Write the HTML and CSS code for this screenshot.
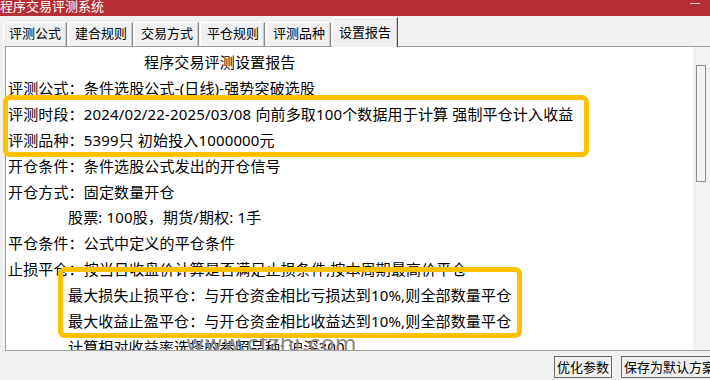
FILE: index.html
```html
<!DOCTYPE html>
<html lang="zh-CN">
<head>
    <meta charset="UTF-8">
    <title>程序交易评测系统</title>
    <link rel="stylesheet" href="styles.css">
</head>
<body>
    <div class="window">
        <div class="titlebar">
            <span class="title">程序交易评测系统</span>
            <span class="min-btn"></span>
        </div>
        <div class="tabs">
            <div class="tab first">评测公式</div>
            <div class="tab">建合规则</div>
            <div class="tab">交易方式</div>
            <div class="tab">平仓规则</div>
            <div class="tab">评测品种</div>
            <div class="tab active">设置报告</div>
        </div>
        <div class="panel">
            <div class="report">
                <p class="heading">程序交易评测设置报告</p>
                <p>评测公式：条件选股公式-(日线)-强势突破选股</p>
                <p>评测时段：2024/02/22-2025/03/08 向前多取100个数据用于计算 强制平仓计入收益</p>
                <p>评测品种：5399只 初始投入1000000元</p>
                <p>开仓条件：条件选股公式发出的开仓信号</p>
                <p>开仓方式：固定数量开仓</p>
                <p class="indent">股票: 100股，期货/期权: 1手</p>
                <p>平仓条件：公式中定义的平仓条件</p>
                <p>止损平仓：按当日收盘价计算是否满足止损条件,按本周期最高价平仓</p>
                <p class="indent">最大损失止损平仓：与开仓资金相比亏损达到10%,则全部数量平仓</p>
                <p class="indent">最大收益止盈平仓：与开仓资金相比收益达到10%,则全部数量平仓</p>
                <p class="indent">计算相对收益率选择的参照品种: 沪深300</p>
            </div>
            <div class="scrollbar">
                <div class="thumb"></div>
            </div>
            <div class="watermark">www.cfzhi.com</div>
        </div>
        <div class="actions">
            <button class="btn">优化参数</button>
            <button class="btn">保存为默认方案</button>
        </div>
        <div class="mark mark-top"></div>
        <div class="mark mark-bottom"></div>
    </div>
</body>
</html>
```

FILE: styles.css
```css
* {
    box-sizing: border-box;
}
body {
    margin: 0;
    background: #f0f0f0;
    font-family: "Noto Sans", "Noto Sans CJK SC", sans-serif;
    color: #000;
    overflow: hidden;
}
.window {
    position: relative;
    width: 710px;
    height: 380px;
    overflow: hidden;
}
.titlebar {
    height: 16px;
    background: #b52e33;
    color: #fff;
    display: flex;
    justify-content: space-between;
    font-size: 13px;
    line-height: 13px;
}
.min-btn {
    width: 10px;
    height: 1px;
    margin: 3px 10px 0 0;
    background: #f4d6d6;
}
.tabs {
    height: 30px;
    display: flex;
    align-items: flex-end;
    padding-left: 0;
}
.tab {
    height: 24px;
    padding: 0 5px 0 6px;
    margin-right: 1px;
    font-size: 13px;
    line-height: 20px;
    border-left: 1px solid #fff;
    border-top: 1px solid #fff;
    border-right: 1px solid #8a8a8a;
    box-shadow: inset -1px 0 0 #c8c8c8;
}
.tab.first {
    padding-left: 5px;
    margin-left: 3px;
}
.tab.active {
    height: 30px;
    padding: 4px 6px 0 6px;
    margin-bottom: -1px;
    background: #f0f0f0;
    position: relative;
    z-index: 1;
    border-right: 1px solid #555;
}
.panel {
    position: relative;
    margin-left: 5px;
    height: 305px;
    background: #fff;
    border-top: 1px solid #a0a0a0;
    border-left: 1px solid #a0a0a0;
    border-bottom: 1px solid #a0a0a0;
    display: flex;
    overflow: hidden;
}
.report {
    flex: 1;
    padding: 3px 0 0 2px;
    font-size: 15px;
    line-height: 25.9px;
    letter-spacing: 0.15px;
}
.report p {
    margin: 0;
    white-space: nowrap;
}
.report .heading {
    padding-left: 136px;
}
.report .indent {
    padding-left: 60px;
}
.scrollbar {
    width: 17px;
    background: #f3f2f1;
    padding: 18px 0 0 3px;
}
.thumb {
    width: 10px;
    height: 117px;
    border: 1px solid #8c8c8c;
    background: #f3f2f1;
}
.watermark {
    position: absolute;
    left: 180px;
    top: 284px;
    font-family: "DejaVu Sans", sans-serif;
    font-size: 22px;
    color: #8a8a8a;
    letter-spacing: 0.5px;
}
.actions {
    display: flex;
    gap: 9px;
    padding: 5px 0 0 554px;
}
.btn {
    flex: none;
    height: 22px;
    padding: 0 2px;
    font-family: "Noto Sans CJK SC", sans-serif;
    font-size: 13px;
    line-height: 20px;
    background: #f0f0f0;
    border: 1px solid #6a6a6a;
    color: #000;
}
.mark {
    position: absolute;
    border: 5px solid #ffc000;
    border-radius: 7px;
}
.mark-top {
    left: 3px;
    top: 95px;
    width: 586px;
    height: 62px;
}
.mark-bottom {
    left: 58px;
    top: 267px;
    width: 464px;
    height: 71px;
}
```
